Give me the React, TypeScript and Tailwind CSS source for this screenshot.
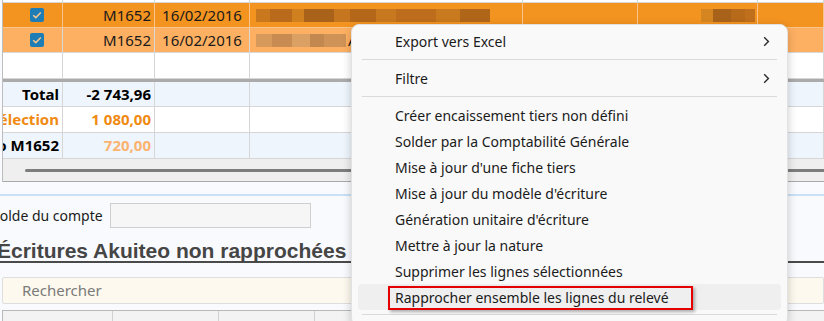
import React from "react";

const W = [
  "w-[60px]",
  "w-[92px]",
  "w-[95px]",
  "w-[273px]",
  "w-[115px]",
  "w-[120px]",
  "flex-1",
];

type RowProps = {
  h: string;
  bg: string;
  line: string;
  cells?: React.ReactNode[];
  justify?: string[];
};

function Row({ h, bg, line, cells = [], justify = [] }: RowProps) {
  return (
    <div className={`flex border-b ${h} ${bg} ${line}`}>
      {W.map((w, i) => (
        <div
          key={i}
          className={`${w} shrink-0 overflow-hidden border-r ${line} flex items-center ${justify[i] ?? ""}`}
        >
          {cells[i]}
        </div>
      ))}
    </div>
  );
}

function Check() {
  return (
    <div className="ml-[27px] flex h-[14px] w-[14px] items-center justify-center rounded-[2px] bg-[#1f7db6]">
      <svg width="10" height="8" viewBox="0 0 10 8">
        <path d="M1.2 4.2 L3.8 6.6 L8.8 1.4" fill="none" stroke="#f6c68e" strokeWidth="1.5" />
      </svg>
    </div>
  );
}

// pixelated, blurred text as it stands in the capture
function Blur({ blocks }: { blocks: [number, string][] }) {
  return (
    <div className="flex h-[13px] items-stretch">
      {blocks.map(([w, c], i) => (
        <div key={i} className={c} style={{ width: w }} />
      ))}
    </div>
  );
}

function Chevron() {
  return (
    <svg width="7" height="11" viewBox="0 0 7 11" className="mr-[11px]">
      <path d="M1.2 1.2 L5.4 5.5 L1.2 9.8" fill="none" stroke="#2a2a2a" strokeWidth="1.4" />
    </svg>
  );
}

const items = [
  "Créer encaissement tiers non défini",
  "Solder par la Comptabilité Générale",
  "Mise à jour d'une fiche tiers",
  "Mise à jour du modèle d'écriture",
  "Génération unitaire d'écriture",
  "Mettre à jour la nature",
  "Supprimer les lignes sélectionnées",
];

function Item({ label, chevron, active }: { label: string; chevron?: boolean; active?: boolean }) {
  return (
    <div
      className={`mx-[6px] flex h-[26px] items-center justify-between rounded-[4px] pl-[37px] ${
        active ? "bg-[#efefef]" : ""
      }`}
    >
      <span>{label}</span>
      {chevron && <Chevron />}
    </div>
  );
}

function Sep() {
  return <div className="mx-[10px] my-[5px] h-px bg-[#dadada]" />;
}

export default function App() {
  const dataText = "text-[15px] text-[#1a1a1a]";
  const num = ["justify-end pr-[3px]", "justify-end pr-[3px]", "justify-center"];
  return (
    <div className="relative h-[321px] w-[824px] overflow-hidden bg-[#f8fafd] font-['Noto_Sans',sans-serif]">
      {/* Upper grid */}
      <div className="ml-[2px] border-l border-[#bdbdbd]">
        <Row h="h-[3px]" bg="bg-white" line="border-[#d6d6d6]" />
        <Row
          h="h-[25px]"
          bg="bg-[#f39320]"
          line="border-[#f7c58c]"
          justify={["", ...num.slice(1)]}
          cells={[
            <Check />,
            <span className={dataText}>M1652</span>,
            <span className={dataText}>16/02/2016</span>,
            <div className="ml-[6px]">
              <Blur
                blocks={[
                  [14, "bg-[#c9781e]"],
                  [22, "bg-[#b96a1a]"],
                  [12, "bg-[#d0801f]"],
                  [30, "bg-[#a9621a]"],
                  [16, "bg-[#c5761e]"],
                  [26, "bg-[#b56719]"],
                  [20, "bg-[#c8781e]"],
                  [40, "bg-[#bd6d1b]"],
                  [24, "bg-[#c9791e]"],
                  [30, "bg-[#b06619]"],
                ]}
              />
            </div>,
            null,
            <div className="ml-auto mr-[2px]">
              <Blur
                blocks={[
                  [12, "bg-[#d68620]"],
                  [18, "bg-[#a9621a]"],
                  [14, "bg-[#b66a1a]"],
                  [10, "bg-[#c06f1c]"],
                ]}
              />
            </div>,
          ]}
        />
        <Row
          h="h-[25px]"
          bg="bg-[#fdb062]"
          line="border-[#d8d8d8]"
          justify={["", ...num.slice(1)]}
          cells={[
            <Check />,
            <span className={dataText}>M1652</span>,
            <span className={dataText}>16/02/2016</span>,
            <div className="ml-[6px] flex items-center gap-[2px]">
              <Blur
                blocks={[
                  [16, "bg-[#d79a5a]"],
                  [20, "bg-[#c88c52]"],
                  [18, "bg-[#dba063]"],
                  [14, "bg-[#c38850]"],
                  [22, "bg-[#cf9357]"],
                ]}
              />
              <span className={dataText}>A</span>
            </div>,
          ]}
        />
        <Row h="h-[26px]" bg="bg-white" line="border-[#d6d6d6]" />
        <div className="h-[3px] bg-[#ababab]" />
        <Row
          h="h-[25px]"
          bg="bg-[#eef5fd]"
          line="border-[#d6d6d6]"
          justify={num}
          cells={[
            <span className="text-[15px] font-bold text-black">Total</span>,
            <span className="text-[15px] font-bold text-black">-2 743,96</span>,
          ]}
        />
        <Row
          h="h-[26px]"
          bg="bg-white"
          line="border-[#d6d6d6]"
          justify={num}
          cells={[
            <span className="shrink-0 whitespace-nowrap text-[15px] font-bold text-[#f08a12]">Sélection</span>,
            <span className="text-[15px] font-bold text-[#f08a12]">1 080,00</span>,
          ]}
        />
        <Row
          h="h-[26px]"
          bg="bg-[#eef5fd]"
          line="border-[#d6d6d6]"
          justify={num}
          cells={[
            <span className="shrink-0 whitespace-nowrap text-[15px] font-bold text-black">Lettrage auto M1652</span>,
            <span className="text-[15px] font-bold text-[#fbb36f]">720,00</span>,
          ]}
        />
        <div className="flex h-[23px] items-center border-b border-[#a9a9a9] bg-[#efefef] pl-[22px]">
          <div className="h-[3px] flex-1 rounded-l-full bg-[#7d7d7d]" />
        </div>
      </div>

      {/* Lower panel */}
      <div className="mt-[12px] h-[2px] bg-[#c8e1f6]" />
      <div className="mt-[7px] flex h-[25px] items-center">
        <span className="-ml-[8px] w-[118px] shrink-0 whitespace-nowrap text-[14px] text-[#1a1a1a]">
          Solde du compte
        </span>
        <div className="h-[25px] w-[201px] border border-[#cfcfcf] bg-[#f6f6f6]" />
      </div>
      <div className="mt-[7px] -ml-[3px] flex h-[28px] items-end border-b-2 border-[#4a4a4a]">
        <span className="whitespace-nowrap font-['Liberation_Sans',sans-serif] text-[21px] font-bold leading-none text-[#454545]">
          Écritures Akuiteo non rapprochées
        </span>
      </div>
      <div className="ml-[2px] mt-[14px] flex h-[27px] items-center rounded-[2px] border border-[#dedede] bg-[#fdf9ee] pl-[19px] text-[15px] text-[#7a7a7a]">
        Rechercher
      </div>
      <div className="ml-[2px] mt-[6px] flex h-[20px] border-l border-t border-[#b9b9b9] bg-[#f3f3f3]">
        <div className="w-[110px] border-r border-[#d0d0d0]" />
        <div className="w-[106px] border-r border-[#d0d0d0]" />
        <div className="w-[96px] border-r border-[#d0d0d0]" />
      </div>

      {/* Context menu */}
      <div className="absolute left-[351px] top-[24px] w-[437px] rounded-[8px] border border-[#e2e2e2] bg-[#f9f9f9] pb-[10px] pt-[3px] text-[14px] text-[#1b1b1b] shadow-[0_3px_10px_rgba(0,0,0,0.2)]">
        <Item label="Export vers Excel" chevron />
        <Sep />
        <Item label="Filtre" chevron />
        <Sep />
        {items.map((l) => (
          <Item key={l} label={l} />
        ))}
        <Item label="Rapprocher ensemble les lignes du relevé" active />
        <div className="mx-[10px] mt-[4px] h-px bg-[#dadada]" />
      </div>

      {/* Annotation frame */}
      <div className="absolute left-[388px] top-[286px] h-[24px] w-[305px] border-2 border-[#e40000] shadow-[2px_2px_3px_rgba(0,0,0,0.3)]" />
    </div>
  );
}
